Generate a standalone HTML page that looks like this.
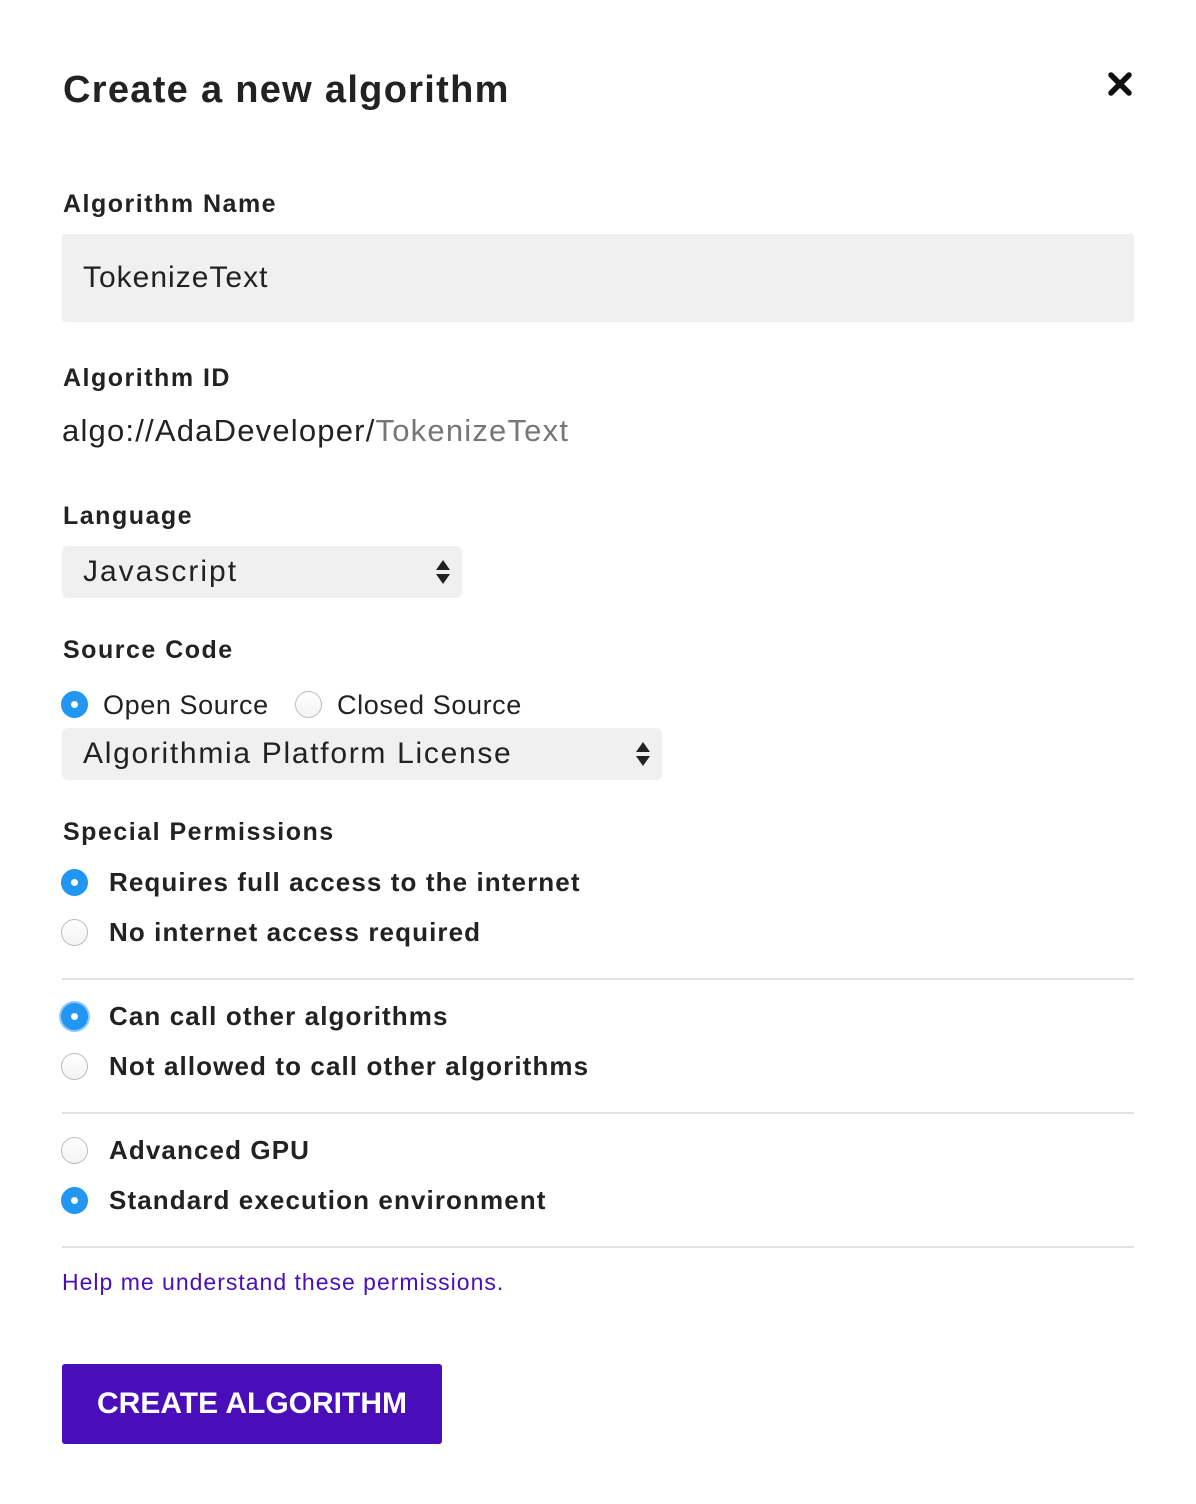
<!DOCTYPE html>
<html><head><meta charset="utf-8"><style>
*{margin:0;padding:0;box-sizing:border-box}
body{width:1196px;height:1504px;background:#fff;font-family:"Liberation Sans",sans-serif;color:#222;position:relative;overflow:hidden}
.a{position:absolute;white-space:nowrap}
.t{font-size:38px;font-weight:bold;line-height:44px;letter-spacing:1.3px}
.l{font-size:25px;font-weight:bold;line-height:30px;letter-spacing:1.5px}
.box{position:absolute;background:#f0f0f0;border-radius:6px}
.r{position:absolute;width:27px;height:27px;border-radius:50%;border:1px solid #bbb;background:linear-gradient(#fff,#f3f3f3)}
.r.on{background:#2196f3;border-color:#2196f3}
.r.on::after{content:"";position:absolute;left:9px;top:9px;width:7px;height:7px;border-radius:50%;background:#fff}
.opt{font-size:26px;font-weight:bold;line-height:30px;letter-spacing:1.1px}
.hr{position:absolute;left:62px;width:1072px;height:2px;background:#e2e2e2}
.arr{position:absolute;width:0;height:0;border-left:7px solid transparent;border-right:7px solid transparent}
</style></head><body>
<div class="a t" style="left:63px;top:68px">Create a new algorithm</div>
<svg class="a" style="left:1107px;top:71px" width="26" height="26" viewBox="0 0 26 26"><path d="M4 4L22 22M22 4L4 22" stroke="#111" stroke-width="5.5" stroke-linecap="round"/></svg>
<div class="a l" style="left:63px;top:189px">Algorithm Name</div>
<div class="box" style="left:62px;top:234px;width:1072px;height:88px;border-radius:3px"></div>
<div class="a" style="left:83px;top:260px;font-size:30px;line-height:36px;letter-spacing:1px">TokenizeText</div>
<div class="a l" style="left:63px;top:363px">Algorithm ID</div>
<div class="a" style="left:62px;top:413px;font-size:31px;line-height:36px;letter-spacing:1.2px">algo://AdaDeveloper/<span style="color:#777">TokenizeText</span></div>
<div class="a l" style="left:63px;top:501px">Language</div>
<div class="box" style="left:62px;top:546px;width:400px;height:52px"></div>
<div class="a" style="left:83px;top:554px;font-size:30px;line-height:36px;letter-spacing:2px">Javascript</div>
<div class="arr" style="left:436px;top:560px;border-bottom:10px solid #222"></div>
<div class="arr" style="left:436px;top:574px;border-top:10px solid #222"></div>
<div class="a l" style="left:63px;top:635px">Source Code</div>
<div class="r on" style="left:61px;top:691px"></div>
<div class="a" style="left:103px;top:689px;font-size:27px;line-height:32px;letter-spacing:0.6px">Open Source</div>
<div class="r" style="left:295px;top:691px"></div>
<div class="a" style="left:337px;top:689px;font-size:27px;line-height:32px;letter-spacing:0.6px">Closed Source</div>
<div class="box" style="left:62px;top:728px;width:600px;height:52px"></div>
<div class="a" style="left:83px;top:736px;font-size:30px;line-height:36px;letter-spacing:1.7px">Algorithmia Platform License</div>
<div class="arr" style="left:636px;top:742px;border-bottom:10px solid #222"></div>
<div class="arr" style="left:636px;top:756px;border-top:10px solid #222"></div>
<div class="a l" style="left:63px;top:817px">Special Permissions</div>
<div class="r on" style="left:61px;top:869px"></div>
<div class="a opt" style="left:109px;top:867px">Requires full access to the internet</div>
<div class="r" style="left:61px;top:919px"></div>
<div class="a opt" style="left:109px;top:917px">No internet access required</div>
<div class="hr" style="top:978px"></div>
<div class="r on" style="left:61px;top:1003px;box-shadow:0 0 0 2px #90c8f8"></div>
<div class="a opt" style="left:109px;top:1001px">Can call other algorithms</div>
<div class="r" style="left:61px;top:1053px"></div>
<div class="a opt" style="left:109px;top:1051px">Not allowed to call other algorithms</div>
<div class="hr" style="top:1112px"></div>
<div class="r" style="left:61px;top:1137px"></div>
<div class="a opt" style="left:109px;top:1135px">Advanced GPU</div>
<div class="r on" style="left:61px;top:1187px"></div>
<div class="a opt" style="left:109px;top:1185px">Standard execution environment</div>
<div class="hr" style="top:1246px"></div>
<div class="a" style="left:62px;top:1268px;font-size:23px;line-height:28px;color:#4a0dba;letter-spacing:1px">Help me understand these permissions.</div>
<div class="a" style="left:62px;top:1364px;width:380px;height:80px;background:#4a0dba;border-radius:3px;color:#fff;font-size:30px;font-weight:bold;line-height:80px;text-align:center">CREATE ALGORITHM</div>
</body></html>
